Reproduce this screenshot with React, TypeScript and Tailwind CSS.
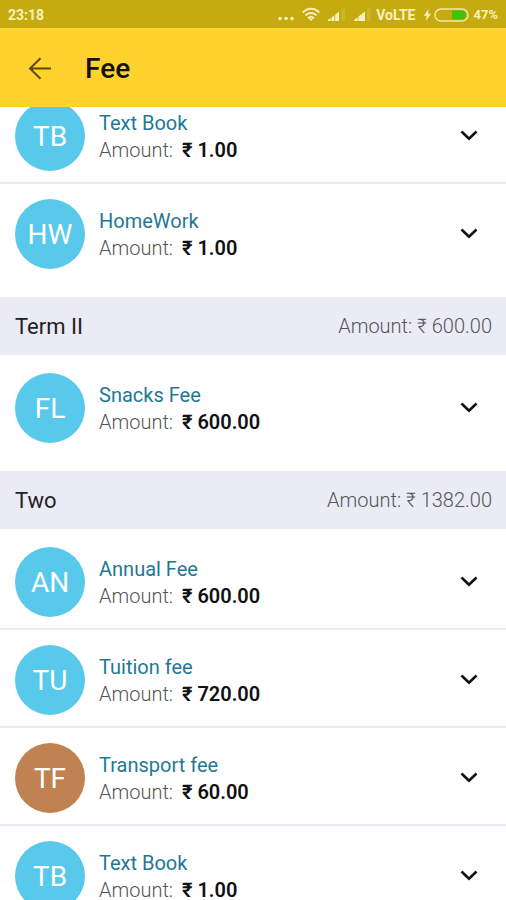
type Fee = { initials: string; name: string; amount: string; color: string };
type Term = { title: string; total: string; fees: Fee[] };

const BLUE = "bg-[#58c9ea]";
const BROWN = "bg-[#bf8250]";

const terms: Term[] = [
  {
    title: "",
    total: "",
    fees: [
      { initials: "TB", name: "Text Book", amount: "₹ 1.00", color: BLUE },
      { initials: "HW", name: "HomeWork", amount: "₹ 1.00", color: BLUE },
    ],
  },
  {
    title: "Term II",
    total: "₹ 600.00",
    fees: [{ initials: "FL", name: "Snacks Fee", amount: "₹ 600.00", color: BLUE }],
  },
  {
    title: "Two",
    total: "₹ 1382.00",
    fees: [
      { initials: "AN", name: "Annual Fee", amount: "₹ 600.00", color: BLUE },
      { initials: "TU", name: "Tuition fee", amount: "₹ 720.00", color: BLUE },
      { initials: "TF", name: "Transport fee", amount: "₹ 60.00", color: BROWN },
      { initials: "TB", name: "Text Book", amount: "₹ 1.00", color: BLUE },
    ],
  },
];

function StatusBar() {
  return (
    <div className="flex h-7 shrink-0 items-center justify-between bg-[#c6ab10] pt-0.5 pr-2 pl-2 text-sm leading-4 font-bold text-[#fbf0bd]">
      <span>23:18</span>
      <div className="flex items-center">
        <svg className="mr-2 h-4 w-4" viewBox="0 0 16 16" fill="currentColor" aria-hidden="true">
          <circle cx="2" cy="11.500" r="1.800" />
          <circle cx="8" cy="11.500" r="1.800" />
          <circle cx="14" cy="11.500" r="1.800" />
        </svg>
        <svg className="mr-2 h-4 w-[18px]" viewBox="0 0 18 16" fill="none" stroke="currentColor" strokeWidth="2" aria-hidden="true">
          <path d="M.8 5.600C5.400 .6 12.600 .6 17.200 5.600M3.400 8.400c3.200-3.300 8-3.300 11.200 0M6 11.200c1.800-1.700 4.200-1.700 6 0" />
          <path d="M6.500 11.500h5L9 14z" fill="currentColor" stroke="none" />
        </svg>
        <svg className="mr-2 h-4 w-[18px]" viewBox="0 0 18 16" fill="currentColor" aria-hidden="true">
          <path d="M0 14v-1.200l2.600-1.600V14zM3.400 14v-3.400l3-2.200V14zM7.200 14V7.800L11 4.500V14z" />
          <path d="M13.500 2.500L17 0v14h-3.500z" opacity=".15" />
        </svg>
        <svg className="mr-1 h-4 w-[18px]" viewBox="0 0 18 16" fill="currentColor" aria-hidden="true">
          <path d="M0 14v-1l3.800-2.800V14zM4.400 14V9.600L11 4.500V14z" />
          <path d="M13 3l3.500-3v14H13z" opacity=".15" />
        </svg>
        <span>VoLTE</span>
        <svg className="ml-2 h-4 w-[9px]" viewBox="0 0 9 16" fill="currentColor" aria-hidden="true">
          <path d="M5.500 2L.8 8.800h3L2.800 14 8 6.800H5z" />
        </svg>
        <svg className="ml-0.5 h-4 w-[35px]" viewBox="0 0 35 16" aria-hidden="true">
          <path d="M18 3.500h9.500a4.500 4.500 0 0 1 0 9H18z" fill="#3fc40b" />
          <rect x="1" y="2" width="33" height="12" rx="6" fill="none" stroke="#f3e6a0" strokeWidth="1.500" />
        </svg>
        <span className="ml-1 text-[13px]">47%</span>
      </div>
    </div>
  );
}

function AppBar() {
  return (
    <header className="flex h-[79px] shrink-0 items-center bg-[#ffd22e] pt-0.5 pl-7">
      <button type="button" aria-label="Back" className="text-[#5c4a0c]">
        <svg className="h-6 w-6" viewBox="0 0 24 24" fill="none" stroke="currentColor" strokeWidth="2" aria-hidden="true">
          <path d="M23 11.500H2M12.500 1.200L2 11.500l10.500 10.300" />
        </svg>
      </button>
      <h1 className="ml-8 pl-px text-[28px] leading-8 font-medium text-[#111]">Fee</h1>
    </header>
  );
}

function FeeRow({ fee }: { fee: Fee }) {
  return (
    <li className="flex items-center border-b-2 border-[#ebebf4] pt-[15px] pr-7 pb-[11px] pl-[15px] last:border-b-0">
      <div className={`flex size-[70px] shrink-0 items-center justify-center rounded-full pt-0.5 text-[28px] text-white ${fee.color}`}>
        {fee.initials}
      </div>
      <div className="ml-3.5 min-w-0 flex-1 pt-0.5 text-xl leading-[27px]">
        <p className="text-[#1f7896]">{fee.name}</p>
        <p className="font-light text-[#555]">
          Amount: <strong className="ml-1 font-semibold text-[#111]">{fee.amount}</strong>
        </p>
      </div>
      <button type="button" aria-label={`Show ${fee.name}`} className="text-[#111]">
        <svg className="h-5 w-[18px]" viewBox="0 0 18 20" fill="none" stroke="currentColor" strokeWidth="2.600" aria-hidden="true">
          <path d="M1.500 5.500L9 12.800l7.500-7.300" />
        </svg>
      </button>
    </li>
  );
}

export default function App() {
  return (
    <div className="flex h-screen flex-col overflow-hidden bg-white font-['Roboto',sans-serif]">
      <StatusBar />
      <AppBar />
      <main className="min-h-0 flex-1 overflow-hidden">
        <div className="-mt-6">
          {terms.map((term, index) => (
            <section key={index}>
              {term.title && (
                <div className="flex h-[58px] items-center justify-between bg-[#ebebf5] pr-[14px] pl-[15px]">
                  <h2 className="text-[22px] text-[#222]">{term.title}</h2>
                  <span className="text-xl font-light text-[#555]">Amount: {term.total}</span>
                </div>
              )}
              <ul className="pt-[3px] pb-[17px]">
                {term.fees.map((fee) => (
                  <FeeRow key={fee.initials} fee={fee} />
                ))}
              </ul>
            </section>
          ))}
        </div>
      </main>
    </div>
  );
}
